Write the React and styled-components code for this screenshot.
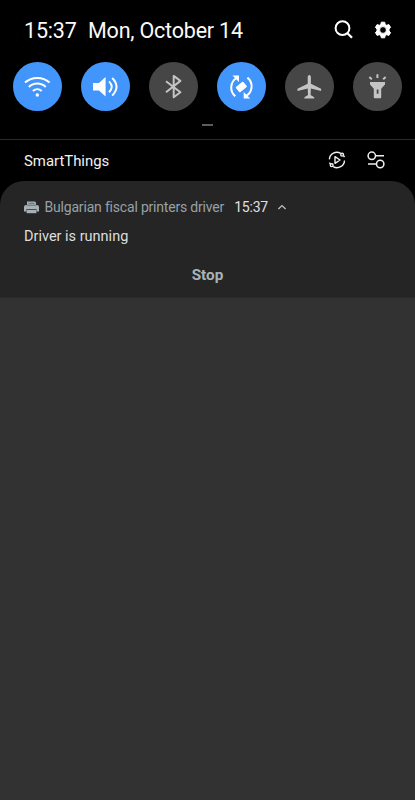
import React from "react";
import styled, { createGlobalStyle } from "styled-components";

const GlobalStyle = createGlobalStyle`
  body {
    margin: 0;
    background: #323232;
    font-family: Roboto, "Noto Sans", sans-serif;
  }
  svg {
    display: block;
  }
`;

const Shade = styled.div`
  width: 100%;
  min-height: 800px;
  background: #323232;
`;
const Panel = styled.div`
  background: #000;
`;
const StatusBar = styled.header`
  height: 62px;
  display: flex;
  align-items: center;
  padding: 0 23px 2px 24px;
  box-sizing: border-box;
  color: #fafafa;
`;
const Clock = styled.span`
  width: 64px;
  font-size: 21.5px;
  line-height: 24px;
  letter-spacing: -0.2px;
  padding-top: 1px;
`;
const DateText = styled.span`
  flex: 1;
  font-size: 21.5px;
  line-height: 24px;
  letter-spacing: -0.2px;
  padding-top: 1px;
`;
const StatusIcons = styled.div`
  display: flex;
  align-items: center;
  gap: 20px;
`;

const Tiles = styled.div`
  display: flex;
  justify-content: space-between;
  padding: 0 13px;
`;
const Tile = styled.button`
  width: 49px;
  height: 49px;
  padding: 0;
  border: 0;
  border-radius: 50%;
  background: ${(props) => (props.$on ? "#4295fb" : "#464646")};
  color: ${(props) => (props.$on ? "#fff" : "#c4c4c4")};
`;
const HandleWrap = styled.div`
  height: 28px;
  display: flex;
  justify-content: center;
  padding-top: 13px;
  box-sizing: border-box;
`;
const Handle = styled.div`
  width: 11px;
  height: 2px;
  background: #5c5c5c;
`;

const DeviceBar = styled.div`
  height: 42px;
  display: flex;
  align-items: center;
  justify-content: space-between;
  padding: 0 30px 0 24px;
  box-sizing: border-box;
  border-top: 1px solid #2b2b2b;
  color: #f2f2f2;
  font-size: 14.9px;
`;
const DeviceIcons = styled.div`
  display: flex;
  gap: 21px;
  padding-bottom: 1px;
`;

const Card = styled.section`
  height: 117px;
  padding: 17px 24px 0;
  box-sizing: border-box;
  border-radius: 24px 24px 0 0;
  background: #252525;
  border-bottom: 1px solid #2b2b2b;
`;
const CardHead = styled.div`
  height: 18px;
  display: flex;
  align-items: center;
  font-size: 14px;
  letter-spacing: -0.19px;
  color: #97a1a6;
`;
const AppName = styled.span`
  margin-left: 5.5px;
`;
const Time = styled.span`
  margin: 0 9px 0 10px;
  color: #e0e0e0;
`;
const Message = styled.p`
  margin: 12px 0 0;
  font-size: 14.5px;
  line-height: 18px;
  color: #dedede;
`;
const StopButton = styled.button`
  display: block;
  margin: 20px auto 0;
  padding: 0;
  border: 0;
  background: none;
  font: 700 15.3px/18px Roboto, sans-serif;
  color: #a9b3b8;
`;

const SearchIcon = () => (
  <svg width="20" height="20" viewBox="0 0 20 20" fill="none" stroke="#fff" strokeWidth="2">
    <circle cx="8.5" cy="8.2" r="6.9" />
    <path d="M13.2 13l4.8 4.8" strokeWidth="2.3" />
  </svg>
);

const GearIcon = () => (
  <svg width="18" height="18" viewBox="0 0 18 18">
    <path
      fill="#fff"
      fillRule="evenodd"
      stroke="#fff"
      strokeWidth="1"
      strokeLinejoin="round"
      d="M7.3 1.2h3.4l.5 2.2 1.5.9 2.2-.7 1.7 2.8-1.6 1.6v2l1.6 1.6-1.7 2.8-2.2-.7-1.5.9-.5 2.2H7.3l-.5-2.2-1.5-.9-2.2.7-1.7-2.8L3 10V8L1.4 6.4l1.7-2.8 2.2.7 1.5-.9zM9 5.6a3.4 3.4 0 1 0 0 6.8 3.4 3.4 0 0 0 0-6.8z"
    />
  </svg>
);

const tileSvg = {
  width: 49,
  height: 49,
  viewBox: "0 0 49 49",
  fill: "none",
  stroke: "currentColor",
  strokeWidth: 2,
};

const WifiIcon = () => (
  <svg {...tileSvg}>
    <path d="M12 20.6a18.4 18.4 0 0 1 24.6 0M15.9 25a12 12 0 0 1 16.8 0M19.9 28.9a6.6 6.6 0 0 1 8.8 0" />
    <circle cx="24.3" cy="33" r="1.7" fill="currentColor" stroke="none" />
  </svg>
);

const VolumeIcon = () => (
  <svg {...tileSvg}>
    <path d="M12 21h6l6.6-6v19.4L18 28.6h-6z" fill="currentColor" stroke="none" />
    <path d="M28 19.4q5.6 5.4 0 10.8M31.2 16q8.6 8.8 0 17.6" />
  </svg>
);

const BluetoothIcon = () => (
  <svg {...tileSvg}>
    <path d="M17 19.3l14.4 11-6.7 5V13.9l6.7 5-14.4 11.4" strokeLinejoin="round" />
  </svg>
);

const RotateIcon = () => (
  <svg {...tileSvg}>
    <path d="M18.3 34.2A11.2 11.2 0 0 1 19.6 16M30.4 15.6A11.2 11.2 0 0 1 29.1 34" />
    <path d="M15.5 13.5H22V20zM33.2 36.4h-6.5v-6.5z" fill="currentColor" stroke="none" />
    <rect
      x="19.5"
      y="21.6"
      width="9.6"
      height="6.8"
      rx="1"
      transform="rotate(-40 24.3 25)"
      fill="currentColor"
      stroke="none"
    />
  </svg>
);

const PlaneIcon = () => (
  <svg {...tileSvg}>
    <path
      fill="currentColor"
      stroke="none"
      d="M24.3 13c1 0 1.6 1 1.6 2.4v6.4l10.2 5v2.2l-10.2-2.4-.3 6.3 3.6 2.3V36.4H19.4v-1.2l3.6-2.3-.3-6.3L12.5 29v-2.2l10.2-5v-6.4c0-1.4.6-2.4 1.6-2.4z"
    />
  </svg>
);

const FlashlightIcon = () => (
  <svg {...tileSvg}>
    <path
      fill="currentColor"
      stroke="none"
      fillRule="evenodd"
      d="M17 20h15v2.4l-3.8 4.4v8.4q0 1-1 1h-5.4q-1 0-1-1v-8.4L17 22.4zM23.7 27.6v4.2h1.8v-4.2z"
    />
    <path d="M24.4 12.3v3.6M16.4 15l2.4 2.4M32.6 15l-2.4 2.4" />
  </svg>
);

const SceneIcon = () => (
  <svg width="18" height="18" viewBox="0 0 18 18" fill="none" stroke="#f0f0f0" strokeWidth="1.4">
    <path d="M1.4 8.4A7.5 7.5 0 0 1 12.7 2.4M16.5 9.4A7.5 7.5 0 0 1 5.2 15.6M1.4 11.6l1 1.4M16.5 6.2l-.9-1.6" />
    <circle cx="14.1" cy="3.7" r="1.4" />
    <circle cx="3.7" cy="14.2" r="1.4" />
    <path d="M7 5.7v6.6L12 9z" strokeLinejoin="round" />
  </svg>
);

const SlidersIcon = () => (
  <svg width="18" height="18" viewBox="0 0 18 18" fill="none" stroke="#f0f0f0" strokeWidth="1.5">
    <circle cx="4.8" cy="4.8" r="3.7" />
    <circle cx="13.2" cy="13" r="3.7" />
    <path d="M8.5 4.8H17M1 13h8.5" />
  </svg>
);

const PrinterIcon = () => (
  <svg width="15" height="13" viewBox="0 0 15 13">
    <path fill="#a7b1b5" d="M3 .5h8l1 1v2.5H3zM2 4h11q2 0 2 2v4.5h-2.5V8h-10v2.5H0V6q0-2 2-2z" />
    <path fill="#a7b1b5" d="M2.6 8.8h9.8v3.4H2.6z" />
    <path stroke="#4a5356" strokeWidth=".7" d="M4.5 2.3h6M2.5 4.2h10M3 8.5h9" />
  </svg>
);

const ChevronUp = () => (
  <svg width="10" height="8" viewBox="0 0 10 8" fill="none" stroke="#c4c4c4" strokeWidth="1.2">
    <path d="M1.4 6L5 2.6 8.6 6" />
  </svg>
);

const tiles = [
  { name: "Wi-Fi", Icon: WifiIcon, on: true },
  { name: "Sound", Icon: VolumeIcon, on: true },
  { name: "Bluetooth", Icon: BluetoothIcon, on: false },
  { name: "Auto rotate", Icon: RotateIcon, on: true },
  { name: "Airplane mode", Icon: PlaneIcon, on: false },
  { name: "Flashlight", Icon: FlashlightIcon, on: false },
];

const App = () => {
  return (
    <>
      <GlobalStyle />
      <Shade>
        <Panel>
          <StatusBar>
            <Clock>15:37</Clock>
            <DateText>Mon, October 14</DateText>
            <StatusIcons>
              <SearchIcon />
              <GearIcon />
            </StatusIcons>
          </StatusBar>
          <Tiles>
            {tiles.map(({ name, Icon, on }) => (
              <Tile key={name} aria-label={name} $on={on}>
                <Icon />
              </Tile>
            ))}
          </Tiles>
          <HandleWrap>
            <Handle />
          </HandleWrap>
          <DeviceBar>
            <span>SmartThings</span>
            <DeviceIcons>
              <SceneIcon />
              <SlidersIcon />
            </DeviceIcons>
          </DeviceBar>
          <Card>
            <CardHead>
              <PrinterIcon />
              <AppName>Bulgarian fiscal printers driver</AppName>
              <Time>15:37</Time>
              <ChevronUp />
            </CardHead>
            <Message>Driver is running</Message>
            <StopButton>Stop</StopButton>
          </Card>
        </Panel>
      </Shade>
    </>
  );
};

export default App;
